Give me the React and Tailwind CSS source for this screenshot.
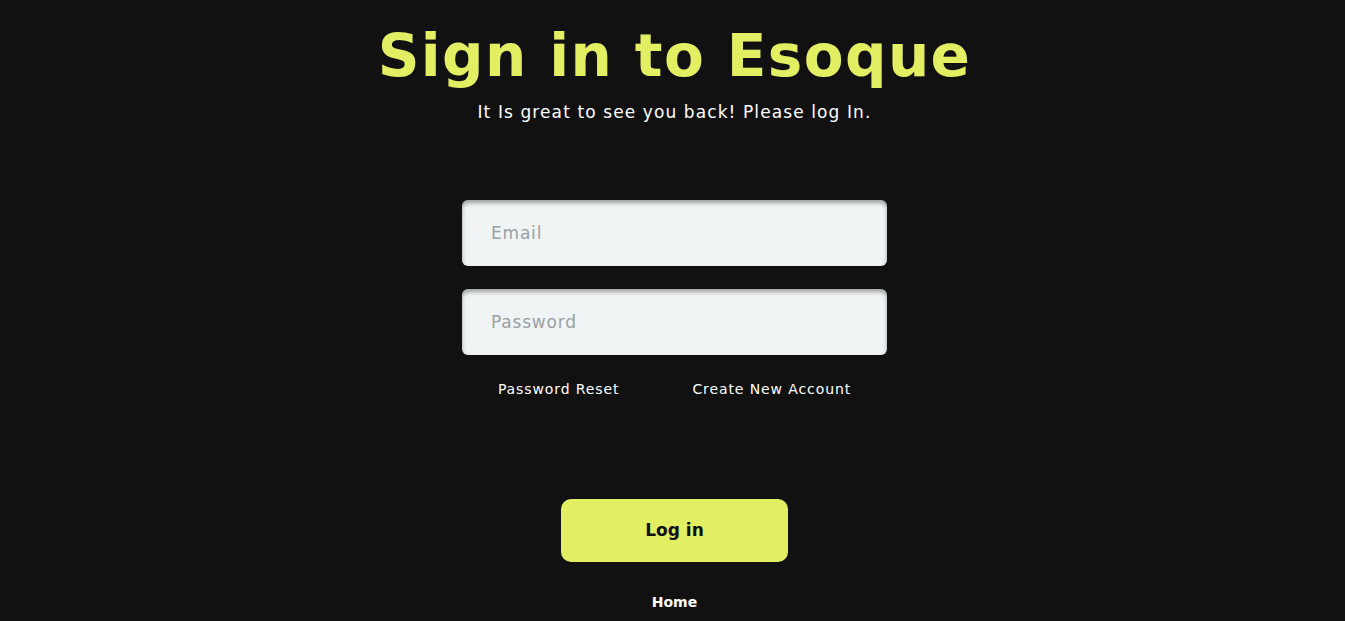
export default function App() {
    return (
        <main className="min-h-screen bg-[#111111] flex flex-col items-center pl-[4px]" style={{ fontFamily: '"DejaVu Sans", sans-serif' }}>
            <h1 className="mt-[22px] text-[58px] leading-[68px] font-bold text-[#e2ef63] tracking-[1.4px]">Sign in to Esoque</h1>
            <p className="mt-[11px] text-[17px] leading-[22px] text-white tracking-[1.1px]">It Is great to see you back! Please log In.</p>

            <form className="mt-[77px] flex flex-col items-center">
                <input
                    type="email"
                    placeholder="Email"
                    className="w-[425px] h-[66px] rounded-[6px] bg-[#f0f4f5] px-[29px] text-[17px] tracking-[0.8px] text-gray-700 placeholder:text-[#9a9fa3] outline-none shadow-[inset_0_3px_4px_rgba(0,0,0,0.35)]"
                />
                <input
                    type="password"
                    placeholder="Password"
                    className="mt-[23px] w-[425px] h-[66px] rounded-[6px] bg-[#f0f4f5] px-[29px] text-[17px] tracking-[0.8px] text-gray-700 placeholder:text-[#9a9fa3] outline-none shadow-[inset_0_3px_4px_rgba(0,0,0,0.35)]"
                />
                <div className="mt-[25px] flex gap-[73px] text-[14px] leading-[18px] tracking-[0.9px] text-white">
                    <a href="#">Password Reset</a>
                    <a href="#">Create New Account</a>
                </div>
                <button type="button" className="mt-[101px] w-[227px] h-[63px] rounded-[10px] bg-[#e2ef63] text-[17px] font-bold text-[#111111]">
                    Log in
                </button>
                <a href="#" className="mt-[30px] text-[14px] font-bold text-white">Home</a>
            </form>
        </main>
    );
}
